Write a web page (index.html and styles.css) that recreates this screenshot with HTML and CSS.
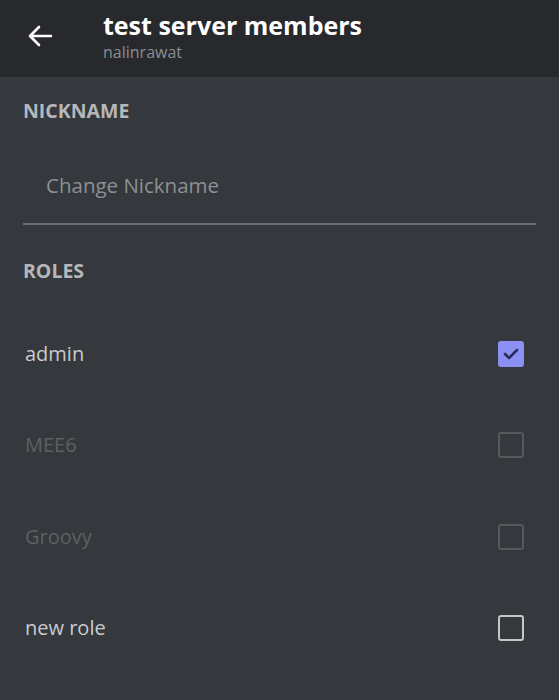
FILE: index.html
```html
<!DOCTYPE html>
<html>
<head>
<meta charset="utf-8">
<link rel="stylesheet" href="styles.css">
</head>
<body>
<header class="topbar">
  <button class="back" aria-label="Back">
    <svg width="26" height="22" viewBox="0 0 26 22"><path d="M24 11H3M12 2L3 11l9 9" fill="none" stroke="#fff" stroke-width="2.6" stroke-linecap="round" stroke-linejoin="round"/></svg>
  </button>
  <div class="titles">
    <div class="title">test server members</div>
    <div class="subtitle">nalinrawat</div>
  </div>
</header>
<main class="content">
  <section class="nick">
    <h2 class="label">NICKNAME</h2>
    <div class="field">Change Nickname</div>
  </section>
  <section class="roles">
    <h2 class="label">ROLES</h2>
    <ul class="role-list">
      <li class="role"><span class="name">admin</span><span class="box checked"><svg width="16" height="12" viewBox="0 0 16 12"><path d="M2 6l4 4 8-8" fill="none" stroke="#2b2d5a" stroke-width="2.6" stroke-linecap="round" stroke-linejoin="round"/></svg></span></li>
      <li class="role disabled"><span class="name">MEE6</span><span class="box"></span></li>
      <li class="role disabled"><span class="name">Groovy</span><span class="box"></span></li>
      <li class="role"><span class="name">new role</span><span class="box"></span></li>
    </ul>
  </section>
</main>
</body>
</html>
```
FILE: styles.css
```css
* { box-sizing: border-box; }
html, body { margin: 0; padding: 0; }
body {
  background: #35383c;
  font-family: "Open Sans", "Noto Sans", sans-serif;
  height: 700px;
  overflow: hidden;
}
.topbar {
  height: 77px;
  background: #27292d;
  display: flex;
  align-items: flex-start;
  padding: 9px 0 0 27px;
}
.back {
  background: none;
  border: 0;
  padding: 0;
  margin-top: 16px;
  width: 26px;
  height: 22px;
  display: flex;
}
.titles { margin-left: 50px; }
.title {
  color: #ffffff;
  font-weight: 700;
  font-size: 25px;
  line-height: 32px;
}
.subtitle {
  color: #8a8d91;
  font-size: 16px;
  line-height: 20px;
  margin-top: 1px;
}
.content { padding: 0 23px; }
.label {
  margin: 0;
  color: #b5b7ba;
  font-size: 19.5px;
  font-weight: 700;
  line-height: 24px;
}
.nick { padding-top: 22px; }
.field {
  margin-top: 49px;
  padding: 0 0 25px 23px;
  color: #8d9094;
  font-size: 20.5px;
  line-height: 26px;
  border-bottom: 2px solid #6b6e72;
}
.roles { padding-top: 34px; }
.role-list { list-style: none; margin: 25px 0 0; padding: 0; }
.role {
  display: flex;
  justify-content: space-between;
  align-items: center;
  height: 91.5px;
  padding-left: 2px;
  padding-right: 12px;
}
.role .name {
  color: #c9cbce;
  font-size: 20px;
  line-height: 26px;
}
.role.disabled .name { color: #5d6064; }
.box {
  width: 26px;
  height: 26px;
  border: 2px solid #c4c6c9;
  border-radius: 3px;
  display: flex;
  align-items: center;
  justify-content: center;
}
.role.disabled .box { border-color: #55585c; }
.box.checked { background: #8c90f5; border-color: #8c90f5; }
```
